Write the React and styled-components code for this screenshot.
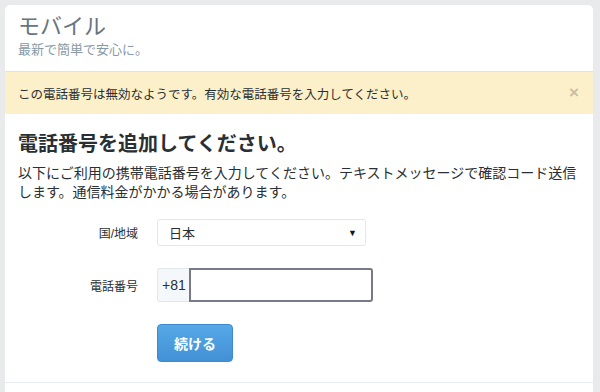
import React from 'react';
import styled, { createGlobalStyle } from 'styled-components';

const FONT = '"Liberation Sans", "Noto Sans CJK JP", sans-serif';

const GlobalStyle = createGlobalStyle`
  html, body {
    margin: 0;
    padding: 0;
    background: #e8eaeb;
    font-family: ${FONT};
  }
`;

const Page = styled.div`
  padding: 5px 7px 0 5px;
  height: 392px;
  box-sizing: border-box;
  overflow: hidden;
`;

const Card = styled.div`
  background: #fff;
  border-radius: 5px 5px 0 0;
  height: 100%;
`;

const Header = styled.div`
  padding: 8px 13px 12px;
`;

const Title = styled.h1`
  margin: 0;
  font-size: 22px;
  line-height: 28px;
  font-weight: normal;
  color: #66757f;
`;

const Subtitle = styled.p`
  margin: 0;
  font-size: 13px;
  line-height: 18px;
  color: #8899a6;
`;

const Alert = styled.div`
  display: flex;
  align-items: center;
  justify-content: space-between;
  height: 43px;
  padding: 0 13px;
  background: #fbf0c9;
  border-top: 1px solid #f3e4ac;
  box-sizing: border-box;
  font-size: 12.5px;
  color: #292f33;
`;

const Close = styled.span`
  font-size: 17px;
  font-weight: bold;
  color: #c5bfa8;
  margin-right: 1px;
`;

const Body = styled.div`
  padding: 17px 13px 0;
  border-bottom: 1px solid #e6ecf0;
`;

const Heading = styled.h2`
  margin: 0 0 7px;
  font-size: 20px;
  line-height: 26px;
  font-weight: bold;
  color: #292f33;
`;

const Text = styled.p`
  margin: 0 0 17px;
  font-size: 14px;
  line-height: 19px;
  color: #292f33;
`;

const Form = styled.div`
  display: grid;
  grid-template-columns: 120px auto;
  column-gap: 19px;
  row-gap: 22px;
  align-items: center;
  padding-bottom: 20px;
`;

const Label = styled.label`
  text-align: right;
  font-size: 12px;
  color: #292f33;
`;

const Select = styled.div`
  display: flex;
  align-items: center;
  justify-content: space-between;
  width: 209px;
  height: 27px;
  padding: 0 8px 0 11px;
  box-sizing: border-box;
  border: 1px solid #e1e8ed;
  border-radius: 3px;
  font-size: 13px;
  color: #292f33;
`;

const Caret = styled.span`
  font-size: 9px;
  color: #14171a;
`;

const PhoneGroup = styled.div`
  display: flex;
  height: 34px;
`;

const Prefix = styled.span`
  display: flex;
  align-items: center;
  padding: 0 3px 0 4px;
  background: #f5f8fa;
  border: 1px solid #e1e8ed;
  border-right: none;
  border-radius: 3px 0 0 3px;
  font-size: 14px;
  color: #292f33;
`;

const Input = styled.input`
  width: 184px;
  height: 34px;
  box-sizing: border-box;
  margin: 0;
  border: 2px solid #777a84;
  border-radius: 0 3px 3px 0;
  outline: none;
  font-family: ${FONT};
  font-size: 14px;
`;

const Button = styled.button`
  justify-self: start;
  width: 76px;
  height: 38px;
  border: 1px solid #3d8bcc;
  border-radius: 4px;
  background: linear-gradient(#56a8e6, #4291d6);
  color: #fff;
  font-family: ${FONT};
  font-size: 14px;
  font-weight: bold;
  cursor: pointer;
`;

export default function App() {
  return (
    <>
      <GlobalStyle />
      <Page>
        <Card>
          <Header>
            <Title>モバイル</Title>
            <Subtitle>最新で簡単で安心に。</Subtitle>
          </Header>
          <Alert>
            <span>この電話番号は無効なようです。有効な電話番号を入力してください。</span>
            <Close>×</Close>
          </Alert>
          <Body>
            <Heading>電話番号を追加してください。</Heading>
            <Text>
              以下にご利用の携帯電話番号を入力してください。テキストメッセージで確認コード送信します。通信料金がかかる場合があります。
            </Text>
            <Form>
              <Label>国/地域</Label>
              <Select>
                <span>日本</span>
                <Caret>▼</Caret>
              </Select>
              <Label>電話番号</Label>
              <PhoneGroup>
                <Prefix>+81</Prefix>
                <Input />
              </PhoneGroup>
              <span />
              <Button>続ける</Button>
            </Form>
          </Body>
        </Card>
      </Page>
    </>
  );
}
